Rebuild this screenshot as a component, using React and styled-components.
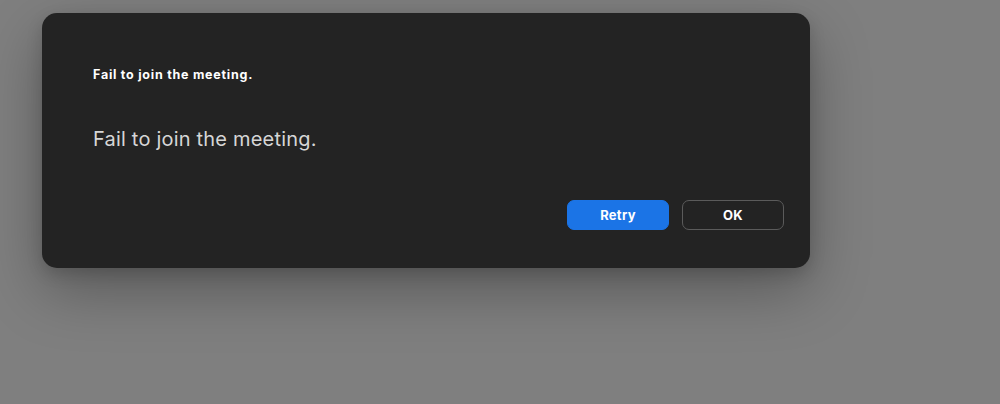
import styled, { createGlobalStyle } from "styled-components";

const Global = createGlobalStyle`
  html, body {
    margin: 0;
    padding: 0;
    background: #7f7f7f;
    font-family: Inter, "Noto Sans", "Liberation Sans", sans-serif;
  }
  body {
    height: 404px;
    overflow: hidden;
  }
`;

const Page = styled.div`
  padding: 13px 0 0 42px;
`;

const Dialog = styled.div`
  width: 768px;
  height: 255px;
  box-sizing: border-box;
  background: #232323;
  border-radius: 15px;
  box-shadow: 0 22px 60px rgba(0, 0, 0, 0.3), 0 6px 16px rgba(0, 0, 0, 0.15);
  padding: 54px 26px 38px 51px;
  display: flex;
  flex-direction: column;
`;

const Title = styled.div`
  font-size: 12.5px;
  line-height: 16px;
  font-weight: 700;
  letter-spacing: 0.75px;
  color: #ffffff;
`;

const Message = styled.div`
  margin-top: 44px;
  font-size: 20px;
  line-height: 24px;
  letter-spacing: 0.2px;
  color: #d6d6d6;
`;

const Actions = styled.div`
  margin-top: auto;
  display: flex;
  justify-content: flex-end;
  gap: 13px;
`;

const Button = styled.button`
  width: 102px;
  height: 30px;
  box-sizing: border-box;
  border-radius: 7px;
  font-family: inherit;
  font-size: 13px;
  font-weight: 700;
  letter-spacing: 0.3px;
  color: #ffffff;
  cursor: pointer;
  background: ${(p) => (p.$primary ? "#1b74e6" : "transparent")};
  border: 1px solid ${(p) => (p.$primary ? "#1b74e6" : "#5b5b5b")};
`;

export default function App() {
  return (
    <Page>
      <Global />
      <Dialog>
        <Title>Fail to join the meeting.</Title>
        <Message>Fail to join the meeting.</Message>
        <Actions>
          <Button $primary>Retry</Button>
          <Button>OK</Button>
        </Actions>
      </Dialog>
    </Page>
  );
}
